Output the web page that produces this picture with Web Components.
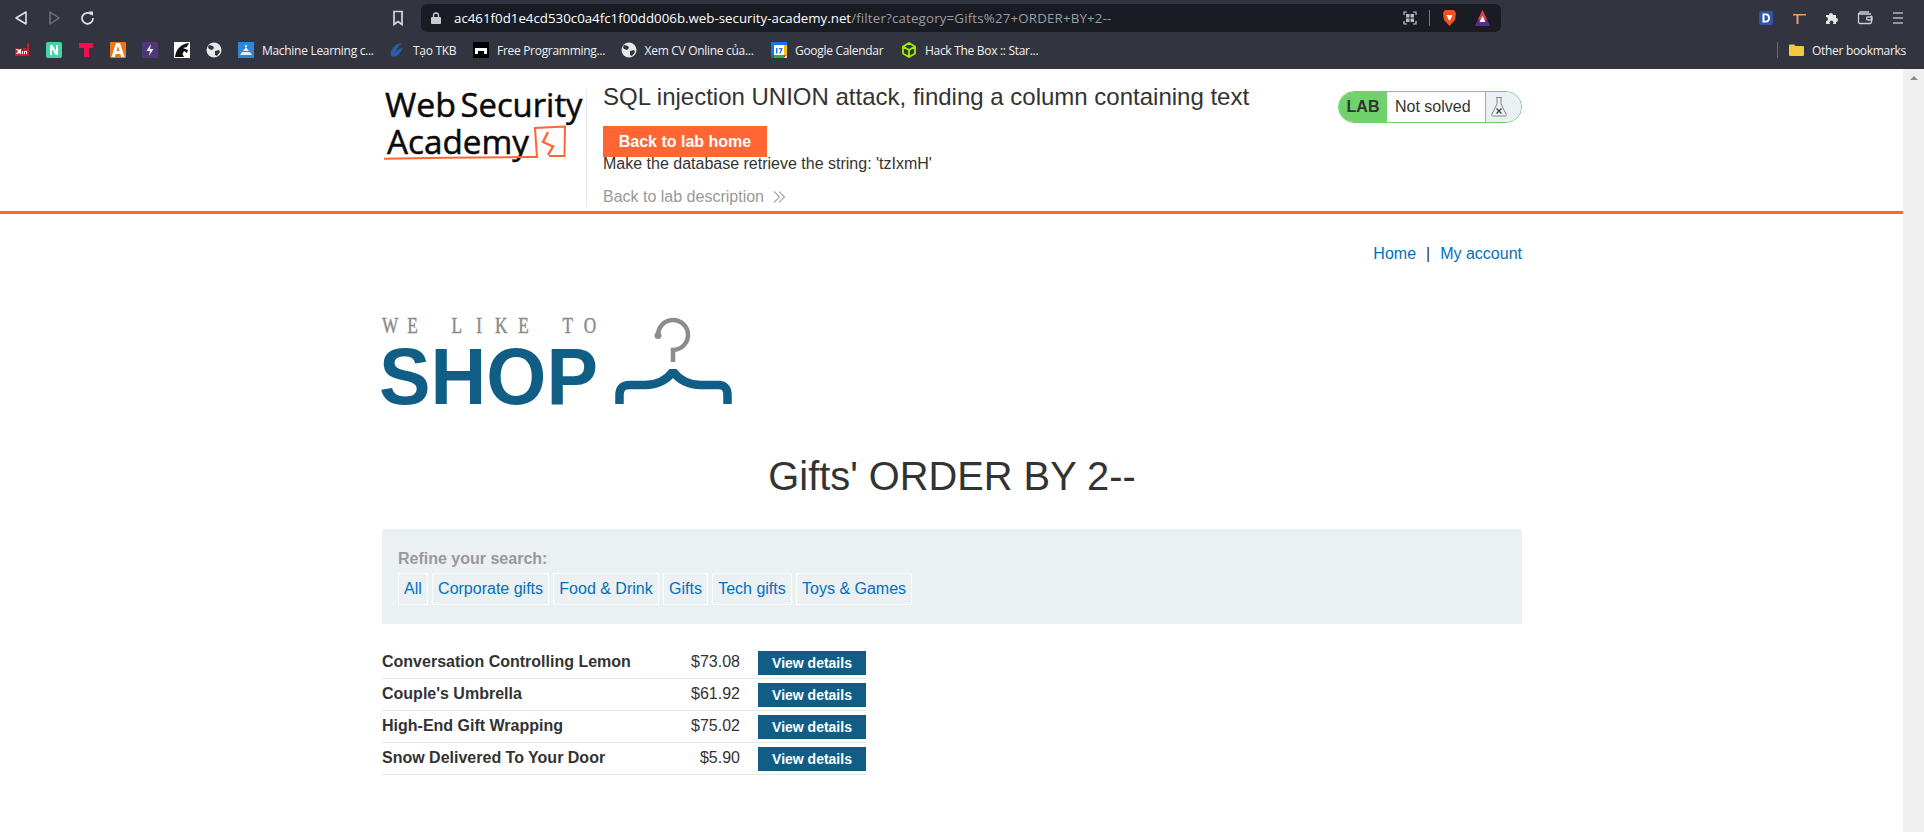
<!DOCTYPE html>
<html><head><meta charset="utf-8"><style>
html,body{margin:0;padding:0;height:100%;overflow:hidden;background:#fff}
body{display:flex;flex-direction:column;font-family:"Liberation Sans",Arial,sans-serif;width:1924px;height:832px}
</style></head><body>
<browser-chrome></browser-chrome>
<page-viewport>
  <lab-header></lab-header>
  <shop-nav></shop-nav>
  <shop-logo></shop-logo>
  <shop-title>Gifts' ORDER BY 2--</shop-title>
  <filter-panel></filter-panel>
  <product-table></product-table>
</page-viewport>
<script>
function def(name, html, setup){
  customElements.define(name, class extends HTMLElement{
    constructor(){super();this.attachShadow({mode:'open'}).innerHTML=html;}
    connectedCallback(){ if(setup) setup(this); }
  });
}
const globe='<svg width="16" height="16" viewBox="0 0 16 16"><circle cx="8" cy="8" r="7.5" fill="#e8e8ea"/><path d="M3 3l4 1 1 2-2 2-3-1-1-2zM9 9l4-1 1 2-3 4-2-1z" fill="#32353f"/></svg>';
const marks=[
 ['<svg width="16" height="16" viewBox="0 0 16 16"><path d="M1 6h2l2 2 2-2h1v2h1V6h2l2 2V3l2-3v14H1z" fill="#c9202c"/><path d="M2 7l2 2.500L2 12h2l1-1.300L6 12h1V7H6L5 8.300 4 7zM8 9h1v3H8zM10 9h3v3h-1v-2h-1v2h-1z" fill="#fff"/></svg>','',32],
 ['<svg width="16" height="16" viewBox="0 0 16 16"><rect width="16" height="16" rx="2" fill="#42d6a4"/><path d="M4 3h2.400L10 9V3h2v10H9.800L6 7v6H4z" fill="#fff"/></svg>','',32],
 ['<svg width="16" height="16" viewBox="0 0 16 16"><path d="M1 1h14v5h-4v9H6V6H1z" fill="#f0104f"/></svg>','',32],
 ['<svg width="16" height="16" viewBox="0 0 16 16"><rect width="16" height="16" rx="1" fill="#e8781c"/><path d="M6 1h4l4.500 14h-3.300l-.8-3H5.600l-.8 3H1.500zM6.400 9h3.200L8 4z" fill="#fff" fill-rule="evenodd"/></svg>','',32],
 ['<svg width="16" height="16" viewBox="0 0 16 16"><rect width="16" height="16" rx="1" fill="#50367a"/><path d="M9 2 4.500 9H8l-1 5 4.500-7H8z" fill="#eee"/></svg>','',32],
 ['<svg width="16" height="16" viewBox="0 0 16 16"><rect width="16" height="16" fill="#fff"/><path d="M1 15C2 7 7 2 15 1l-2 4-4 1 5 2-1 3-3-2-3 6zM6 15l2-4 2 4z" fill="#111"/></svg>','',32],
 [globe,'',32],
 ['<svg width="16" height="16" viewBox="0 0 16 16"><rect width="16" height="16" fill="#2d88d8"/><path d="M2 13l2-3h8l2 3zM5 9l3-4 3 4zM7 3h2v2H7z" fill="#dfeefa"/></svg>','Machine Learning c...',151],
 ['<svg width="16" height="16" viewBox="0 0 16 16"><path d="M2 14C1 8 5 2 13 1 9 4 7 8 7 10c2-3 5-4 7-4-2 2-3 7-7 8-2 .5-4 1-5 0z" fill="#2a5ea8"/></svg>','Tạo TKB',84],
 ['<svg width="16" height="16" viewBox="0 0 16 16"><rect width="16" height="16" fill="#000"/><path d="M2 6h12v6h-3V9H5v3H2z" fill="#fff"/></svg>','Free Programming...',147.600],
 [globe,'Xem CV Online của...',150.400],
 ['<svg width="16" height="16" viewBox="0 0 16 16"><rect width="16" height="16" rx="1" fill="#fff"/><path d="M0 0h16v3H3v10H0z" fill="#1a73e8"/><path d="M0 13h13v3H0z" fill="#34a853"/><path d="M13 3h3v10h-3z" fill="#fbbc04"/><path d="M0 13h3v3H0z" fill="#188038"/><path d="M13 13h3l-3 3z" fill="#ea4335"/><path d="M5 6h1.500v5.500H5zM8 6h3.500v1l-2 4.500H8l2-4.300H8z" fill="#1a73e8"/></svg>','Google Calendar',130],
 ['<svg width="16" height="16" viewBox="0 0 16 16"><path d="M8 1l6 3.500v7L8 15l-6-3.500v-7zM2 4.500L8 8l6-3.500M8 8v7" fill="none" stroke="#9fef00" stroke-width="1.800"/></svg>','Hack The Box :: Star...',140]
];
def('browser-chrome',`<style>
:host{display:block;height:69px;background:#32353f;color:#f0f0f0;font:12px "Open Sans","Liberation Sans",sans-serif;flex:none}
.top{height:35px;display:flex;align-items:center}
.nav{display:flex;align-items:center;gap:19px;padding-left:14px}
.nav svg,.r svg{display:block}
.bm{margin-left:298px;margin-right:17px;flex:none}
.url{width:1080px;flex:none;height:28px;box-sizing:border-box;background:#1a1c24;border-radius:6px;display:flex;align-items:center;padding-left:10px;font:13.300px "Open Sans",sans-serif;color:#fff;white-space:nowrap;gap:9px}
.url b{font-weight:400}.url i{font-style:normal;color:#9a9ca3;letter-spacing:.17px}
.url .tx{margin-left:4px}
.url .sp{flex:1}
.r{display:flex;align-items:center;margin-left:auto;padding-right:9.500px}
.r span{width:33px;display:flex;justify-content:center}
.bar{height:30px;display:flex;align-items:center;padding-left:14px;font-size:12px;white-space:nowrap;letter-spacing:-.3px}
.i{display:flex;align-items:center;gap:8px;flex:none;box-sizing:border-box}
.i svg{flex:none}
.other{margin-left:auto;display:flex;align-items:center;gap:8px;padding-right:18px}
.sep{width:1px;height:16px;background:#666a74;margin-right:3px}
</style>
<div class="top">
 <div class="nav">
  <svg width="14" height="16" viewBox="0 0 14 16"><path d="M12 2v12L2 8z" fill="none" stroke="#e4e4e6" stroke-width="1.500" stroke-linejoin="round"/></svg>
  <svg width="14" height="16" viewBox="0 0 14 16"><path d="M3 2v12l9-6z" fill="none" stroke="#70727a" stroke-width="1.500" stroke-linejoin="round"/></svg>
  <svg width="14" height="16" viewBox="0 0 14 16"><path d="M11.500 4.500A5.500 5.500 0 1 0 13 8" fill="none" stroke="#e4e4e6" stroke-width="1.700"/><path d="M8.500 1.500h4.500v4.500z" fill="#e4e4e6"/></svg>
 </div>
 <svg class="bm" width="12" height="16" viewBox="0 0 12 16"><path d="M2 1.500h8v13L6 11.500 2 14.500z" fill="none" stroke="#d8d8da" stroke-width="1.700"/></svg>
 <div class="url">
  <svg width="10" height="12" viewBox="0 0 10 12"><rect y="5" width="10" height="7" rx="1" fill="#c9cace"/><path d="M2.500 5V3.500a2.500 2.500 0 0 1 5 0V5" fill="none" stroke="#c9cace" stroke-width="1.300"/></svg>
  <span class="tx"><b>ac461f0d1e4cd530c0a4fc1f00dd006b.web-security-academy.net</b><i>/filter?category=Gifts%27+ORDER+BY+2--</i></span>
  <span class="sp"></span>
  <svg width="14" height="14" viewBox="0 0 14 14"><path d="M1 4V1h3M10 1h3v3M13 10v3h-3M4 13H1v-3" fill="none" stroke="#c8c8c8" stroke-width="1.200"/><rect x="3" y="3" width="3.500" height="3.500" fill="#bbb"/><rect x="7.500" y="3" width="3.500" height="3.500" fill="#bbb"/><rect x="3" y="7.500" width="3.500" height="3.500" fill="#bbb"/><rect x="7.500" y="7.500" width="3.500" height="3.500" fill="#bbb"/></svg>
  <span style="width:1px;height:16px;background:#777;margin:0 3px"></span>
  <svg width="15" height="18" viewBox="0 0 15 18"><path d="M3 1h9l2 3-1 7-5.500 6L2 11 1 4z" fill="#f0531f"/><path d="M4.500 6h6L9 9.500 7.500 12 6 9.500z" fill="#fff"/></svg>
  <svg width="15" height="16" viewBox="0 0 15 16" style="margin:0 11px 0 9px"><path d="M7.500 0 15 16H0z" fill="#5a2d86"/><path d="M7.500 0 12 9.500H3z" fill="#e8413c"/><path d="M7.500 6l3 6h-6z" fill="#fff"/></svg>
 </div>
 <div class="r">
  <span><svg width="14" height="14" viewBox="0 0 14 14"><rect width="14" height="14" rx="2" fill="#2f55a4"/><path d="M3.500 2.500h3.300c3 0 4.200 2 4.200 4.500s-1.200 4.500-4.200 4.500H3.500zM5.500 4.200v5.600h1.200C8.300 9.800 9 8.700 9 7S8.300 4.200 6.700 4.200z" fill="#fff" fill-rule="evenodd"/></svg></span>
  <span><svg width="14" height="14" viewBox="0 0 14 14"><path d="M1 3h13v1.500H6.500V13H4.500V4.500H1z" fill="#e8a060"/></svg></span>
  <span><svg width="15" height="15" viewBox="0 0 15 15"><path d="M1 5h3a2 2 0 1 1 4 0h3v3a2 2 0 1 1 0 4v2H8a2 2 0 1 0-3 0H1v-3a2 2 0 1 0 0-4z" fill="#e6e6e8"/></svg></span>
  <span><svg width="16" height="14" viewBox="0 0 16 14"><path d="M14 3H3a1.500 1.500 0 0 1 0-2h9M1.500 2v9a1.500 1.500 0 0 0 1.500 1.500h10A1.500 1.500 0 0 0 14.500 11V4.500M15 6h-4a1.500 1.500 0 0 0 0 3h4z" fill="none" stroke="#d0d0d2" stroke-width="1.300"/></svg></span>
  <span><svg width="10" height="12" viewBox="0 0 10 12"><path d="M0 1h10M0 6h10M0 11h10" stroke="#b5b5b8" stroke-width="1.600"/></svg></span>
 </div>
</div>
<div class="bar"></div>`, el=>{
  const bar=el.shadowRoot.querySelector('.bar');
  if(bar.children.length) return;
  bar.innerHTML=marks.map(([s,t,w])=>`<span class="i" style="width:${w}px">${s}${t?`<span>${t}</span>`:''}</span>`).join('')+
   `<span class="other"><span class="sep"></span><svg width="15" height="12" viewBox="0 0 15 12"><path d="M0 1.500A1 1 0 0 1 1 .5h4l1.500 1.500H14a1 1 0 0 1 1 1V11a1 1 0 0 1-1 1H1a1 1 0 0 1-1-1z" fill="#f5c842"/></svg><span>Other bookmarks</span></span>`;
});
def('page-viewport',`<style>
:host{display:flex;flex:1;min-height:0;background:#fff}
.main{flex:1;min-width:0;overflow:hidden}
.bar{width:21px;background:#f0f0f0;flex:none;display:flex;flex-direction:column;align-items:center;padding-top:7px;box-sizing:border-box}
.tri{width:0;height:0;border:4px solid transparent;border-top:0;border-bottom:4px solid #8c8c8c}
</style><div class="main"><slot></slot></div><div class="bar"><span class="tri"></span></div>`);
def('lab-header',`<style>
:host{display:block;height:145px;border-bottom:3px solid #ff6633;box-sizing:border-box;color:#333332}
.in{width:1140px;display:flex;height:142px;margin-left:382px}
.logo{width:204px;flex:none;padding-top:11px;box-sizing:border-box}
.logo svg{display:block;margin-left:-2px}
.sep{width:1px;flex:none;background:#e6e8ea;margin-top:21px;height:117px}
.txt{flex:1;padding-left:16px}
h2{font-weight:400;font-size:24px;line-height:28px;margin:14px 0 0;white-space:nowrap}
.btn{display:block;width:164px;height:31px;line-height:31px;background:#ff6633;color:#fff;font-weight:700;font-size:16px;text-align:center;margin-top:15px}
p{margin:-2px 0 0;font-size:16px;line-height:18px}
.back{margin-top:15px;font-size:16px;line-height:18px;color:#999;display:flex;align-items:center;gap:9px}
.st{flex:none;width:184px;height:32px;margin-top:22px;display:flex;border:1px solid #70d16d;border-radius:17px;overflow:hidden;box-sizing:border-box;font-size:16px;background:#fff}
.lab{background:#70d16d;font-weight:700;width:48px;display:flex;align-items:center;justify-content:center;box-sizing:border-box}
.ns{width:99px;display:flex;align-items:center;padding-left:8px;box-sizing:border-box;border-right:1px solid #70d16d}
.ic{flex:1;background:#ebf0f2;display:flex;align-items:center;padding-left:5px}
.ic svg{display:block}
</style><div class="in">
 <div class="logo"><svg width="210" height="90" viewBox="0 0 210 90" role="img" aria-label="Web Security Academy">
  <g font-family="Open Sans,Liberation Sans" font-size="33.500" fill="#0a0a0a" stroke="#0a0a0a" stroke-width=".5">
  <text x="5" y="37" textLength="71" lengthAdjust="spacingAndGlyphs">Web</text>
  <text x="80.500" y="37" textLength="122" lengthAdjust="spacingAndGlyphs">Security</text>
  <text x="7" y="74" textLength="142" lengthAdjust="spacingAndGlyphs">Academy</text>
  </g>
  <path d="M4 78.700C50 78 100 77.500 145 77H157L155 48L185 46.600L184.500 76H169" fill="none" stroke="#ff6633" stroke-width="2"/>
  <path d="M168 52L163 62L173 66.500L168 75" fill="none" stroke="#ff6633" stroke-width="2.400"/>
 </svg></div>
 <div class="sep"></div>
 <div class="txt">
  <h2>SQL injection UNION attack, finding a column containing text</h2>
  <a class="btn">Back to lab home</a>
  <p>Make the database retrieve the string: 'tzIxmH'</p>
  <div class="back">Back to lab description <svg width="13" height="12" viewBox="0 0 13 12"><path d="M1 .500l5.500 5.500-5.500 5.500M6 .500l5.500 5.500-5.500 5.500" fill="none" stroke="#aaa" stroke-width="1.200"/></svg></div>
 </div>
 <div class="st"><span class="lab">LAB</span><span class="ns">Not solved</span><span class="ic"><svg width="16" height="20" viewBox="0 0 16 20"><path d="M5 .500h6M6 .500v6.500L.800 17.500a1 1 0 0 0 1 1.500h12.400a1 1 0 0 0 1-1.500L10 7V.500" fill="none" stroke="#888" stroke-width="1"/><path d="M5.500 11.500l5 5M10.500 11.500l-5 5" stroke="#444" stroke-width="1.300"/></svg></span></div>
</div>`);
def('shop-nav',`<style>
:host{display:flex;justify-content:flex-end;width:1140px;margin-left:382px;font-size:16px;line-height:18px;color:#333;padding-top:31px;gap:10px}
a{color:#0071bc}
</style><a>Home</a><span>|</span><a>My account</a>`);
def('shop-logo',`<style>
:host{display:block;margin:50px 0 0 378px;width:374px;height:96px}
svg{display:block}
</style><svg width="374" height="96" viewBox="-4 0 374 96" role="img">
<g transform="scale(.72 1)"><text y="20" x="11.500 42.300 73.200 104 134.800 165.700 196.500 227.300 258.200 289" text-anchor="middle" font-family="Liberation Serif" font-size="24" fill="#8a8a8a" stroke="#8a8a8a" stroke-width=".45">WE LIKE TO</text></g>
<text x="-3" y="90.700" font-family="Liberation Sans" font-weight="700" font-size="80" textLength="219" lengthAdjust="spacingAndGlyphs" fill="#105e85">SHOP</text>
<circle cx="276" cy="22.500" r="3.500" fill="#8c8c8c"/>
<path d="M276 22.500A15 15 0 1 1 291 37V49" fill="none" stroke="#8c8c8c" stroke-width="4.500"/>
<path d="M237.500 91V82q0-10 10-10H263q18 0 28-13.500 10 13.500 28 13.500h17.500q9 0 9 10v9" fill="none" stroke="#105e85" stroke-width="8.500" stroke-linejoin="bevel"/>
</svg>`);
def('shop-title',`<style>
:host{display:block;width:1140px;margin:44px 0 0 382px;text-align:center;font-size:39.800px;line-height:46px;color:#333}
</style><slot></slot>`);
def('filter-panel',`<style>
:host{display:block;width:1140px;height:95px;box-sizing:border-box;margin:30px 0 0 382px;background:#ebf0f2;padding:21px 16px 0;font-size:16px}
.t{font-weight:700;color:#999;line-height:18px}
.l{display:flex;gap:4.300px;margin-top:5px}
a{border:1px solid #fff;color:#0071bc;padding:0 5px;height:32px;line-height:30px;box-sizing:border-box;display:block}
</style><div class="t">Refine your search:</div><div class="l"><a>All</a><a>Corporate gifts</a><a>Food &amp; Drink</a><a>Gifts</a><a>Tech gifts</a><a>Toys &amp; Games</a></div>`);
def('product-table',`<style>
:host{display:block;width:484px;margin:23px 0 0 382px;font-size:16px;color:#333}
.r{display:flex;align-items:center;border-bottom:1px solid #e6e6e6;box-sizing:border-box;height:32px}
.r b{flex:1;margin-top:-1px}
.p{margin-right:18px;margin-top:-1px}
a{display:block;width:108px;height:24px;line-height:24px;background:#105e85;color:#fff;font-weight:700;font-size:14px;text-align:center}
</style>
<div class="r"><b>Conversation Controlling Lemon</b><span class="p">$73.08</span><a>View details</a></div>
<div class="r"><b>Couple's Umbrella</b><span class="p">$61.92</span><a>View details</a></div>
<div class="r"><b>High-End Gift Wrapping</b><span class="p">$75.02</span><a>View details</a></div>
<div class="r"><b>Snow Delivered To Your Door</b><span class="p">$5.90</span><a>View details</a></div>`);
</script>
</body></html>
